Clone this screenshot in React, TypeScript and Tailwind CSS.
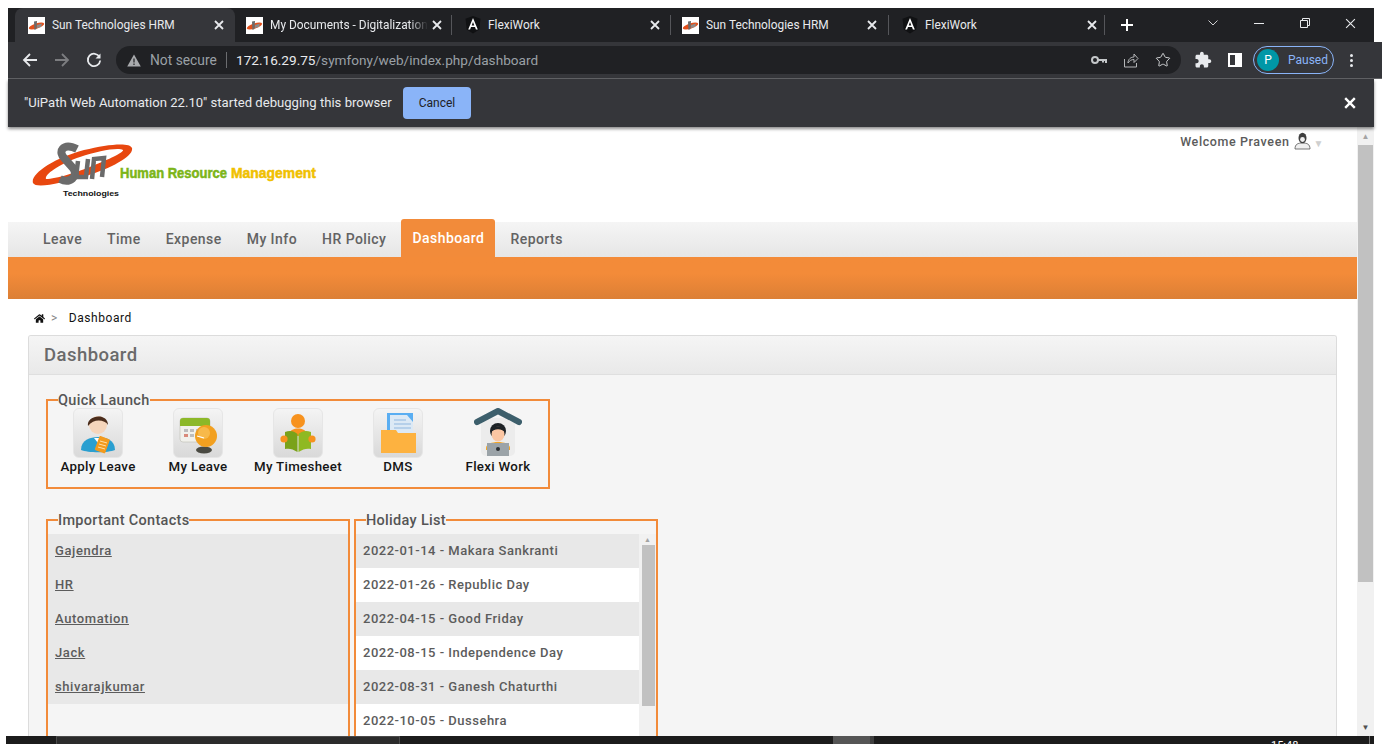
import React from "react";
import { FaHome } from "react-icons/fa";
import { Star } from "lucide-react";

const Favicon = () => (
  <svg width="17" height="17" viewBox="0 0 17 17" className="shrink-0">
    <rect width="17" height="17" fill="#fff" />
    <ellipse cx="8.5" cy="9" rx="8" ry="2.6" fill="#e2501c" transform="rotate(-18 8.5 9)" />
    <path d="M6 4.5 L9 4 L8.5 12 L6.5 13 Z" fill="#6b6b6b" />
    <path d="M9 8 L14 6.5 L13 10 L9 11 Z" fill="#8b8b8b" />
  </svg>
);

const AngularIcon = () => (
  <svg width="16" height="18" viewBox="0 0 16 18" className="shrink-0">
    <path d="M8 0 L15.5 2.7 L14.3 13.6 L8 17.5 L1.7 13.6 L0.5 2.7 Z" fill="#101113" />
    <path d="M8 2 L3.2 13.4 H5.1 L6 11 H10 L10.9 13.4 H12.8 Z M6.7 9.4 L8 6 L9.3 9.4 Z" fill="#fff" fillRule="evenodd" />
  </svg>
);

const X = ({ s = 10, w = 1.8, c = "#e8eaed" }: { s?: number; w?: number; c?: string }) => (
  <svg width={s} height={s} viewBox="0 0 10 10">
    <path d="M1 1 L9 9 M9 1 L1 9" stroke={c} strokeWidth={w} />
  </svg>
);

const Tab = ({ title, angular, active, sep, width, xPos, fade }: { title: string; angular?: boolean; active?: boolean; sep?: boolean; width: string; xPos: string; fade?: boolean }) => (
  <div className={`relative flex items-center h-[34px] shrink-0 ${width} ${active ? "bg-[#35363a] rounded-t-lg pl-[13px]" : angular ? "pl-[13px]" : "pl-[11px]"} ${sep ? "after:absolute after:right-0 after:top-[7px] after:h-[20px] after:w-px after:bg-[#55565a]" : ""}`}>
    <div className={`flex items-center ${angular ? "w-[23px]" : "w-[24px]"}`}>{angular ? <AngularIcon /> : <Favicon />}</div>
    <span className={`text-[11.9px] leading-[16px] text-[#e8eaed] whitespace-nowrap overflow-hidden w-[158px] ${fade ? "[mask-image:linear-gradient(to_right,black_88%,transparent)]" : ""}`}>{title}</span>
    <div className={`absolute top-[12px] flex ${xPos}`}><X /></div>
  </div>
);

const Logo = () => (
  <svg width="290" height="62" viewBox="0 0 290 62" className="block">
    <path fillRule="evenodd" fill="#e8470f" d="M1 41 C-2 32 22 16 52 8 C76 2 98 0 100 6 C102 14 80 26 54 34 C30 41 4 47 1 41 Z M14 37 C24 37 46 30 60 24 C78 17 92 10 91 8 C86 5 66 9 48 15 C30 21 12 32 14 37 Z" />
    <path d="M45 7 C31 0 25 10 33 17 L41 26 C47 34 38 42 28 37" fill="none" stroke="#6b6b6b" strokeWidth="8" />
    <path d="M46 19 L44 35 L54 35 L56 17 M60 37 L62 17 L72 16 L70 35" fill="none" stroke="#6a6a6a" strokeWidth="4.5" />
    <text x="88" y="36" fontFamily="'Liberation Sans',sans-serif" fontWeight="700" fontSize="14" fill="#7cb518" stroke="#7cb518" strokeWidth="0.5" textLength="107" lengthAdjust="spacingAndGlyphs">Human Resource</text>
    <text x="199" y="36" fontFamily="'Liberation Sans',sans-serif" fontWeight="700" fontSize="14" fill="#f0c000" stroke="#f0c000" strokeWidth="0.5" textLength="85" lengthAdjust="spacingAndGlyphs">Management</text>
    <text x="31" y="54" fontFamily="'Liberation Sans',sans-serif" fontWeight="700" fontSize="8" fill="#111" textLength="56" lengthAdjust="spacingAndGlyphs">Technologies</text>
  </svg>
);

const Tile = ({ children, plain }: { children: React.ReactNode; plain?: boolean }) => (
  <div className={`w-[50px] h-[50px] flex items-center justify-center ${plain ? "" : "rounded-md border border-[#e6e6e6] bg-gradient-to-b from-[#f4f4f4] to-[#d9d9d9]"}`}>{children}</div>
);

const ApplyIcon = () => (
  <svg width="40" height="42" viewBox="0 0 40 42">
    <path d="M3 38 C3 28 12 25 20 25 C28 25 37 28 37 38 C30 41 10 41 3 38 Z" fill="#2a9fd0" />
    <circle cx="20" cy="13" r="9" fill="#f5d5bb" />
    <path d="M10 14 C8 3 30 0 30 13 C27 8 16 6 10 14 Z" fill="#4b2d1c" />
    <path d="M16 26 L20 31 L24 26 Z" fill="#fff" />
    <rect x="19" y="25" width="11" height="15" rx="1" fill="#f39a1d" transform="rotate(20 24 32)" />
    <path d="M22 29 L29 31 M21 32 L28 34 M20 35 L27 37" stroke="#ffe0a8" strokeWidth="1" />
  </svg>
);
const LeaveIcon = () => (
  <svg width="40" height="42" viewBox="0 0 40 42">
    <rect x="2" y="6" width="30" height="24" rx="3" fill="#f1f1ec" stroke="#bcbcb4" strokeWidth="0.6" />
    <path d="M2 14 V9 a3 3 0 0 1 3-3 H29 a3 3 0 0 1 3 3 V14 Z" fill="#8cb828" />
    <g fill="#bdbdbd">
      <rect x="6" y="17" width="4" height="3" /><rect x="12" y="17" width="4" height="3" /><rect x="18" y="17" width="4" height="3" />
      <rect x="12" y="22" width="4" height="3" />
    </g>
    <rect x="6" y="22" width="4" height="3" fill="#d98a7a" />
    <ellipse cx="26" cy="38" rx="8" ry="3.5" fill="#4a4a42" />
    <circle cx="28" cy="24" r="11" fill="#f2a020" />
    <circle cx="26" cy="21" r="6" fill="#f9c35c" opacity="0.7" />
    <path d="M19 24 L26 26" stroke="#fff" strokeWidth="1.2" />
  </svg>
);
const SheetIcon = () => (
  <svg width="40" height="42" viewBox="0 0 40 42">
    <circle cx="20" cy="9" r="7" fill="#f7921e" />
    <path d="M12 21 C12 15 28 15 28 21 L26 24 H14 Z" fill="#f7921e" />
    <path d="M7 20 C12 18 16 19 19.5 22 V40 C15 37 11 36 7 37 Z" fill="#7aa21a" />
    <path d="M33 20 C28 18 24 19 20.5 22 V40 C25 37 29 36 33 37 Z" fill="#8fb922" />
    <circle cx="6" cy="27" r="3.6" fill="#f7921e" />
    <circle cx="34" cy="27" r="3.6" fill="#f7921e" />
  </svg>
);
const DmsIcon = () => (
  <svg width="42" height="44" viewBox="0 0 42 44">
    <rect x="10" y="2" width="26" height="24" fill="#5aaef2" />
    <path d="M13 4 H30 L36 11 V26 H13 Z" fill="#dce9f5" />
    <path d="M17 9 H29 M17 13 H34 M17 17 H34" stroke="#a9c8e6" strokeWidth="1.3" />
    <path d="M4 19 H19 L21 22 H39 V42 H4 Z" fill="#fdb240" />
  </svg>
);
const FlexiIcon = () => (
  <svg width="48" height="50" viewBox="0 0 48 50" className="block">
    <rect x="7" y="10" width="34" height="38" rx="5" fill="#ececec" />
    <path d="M3 14 L24 3 L45 14" fill="none" stroke="#3d5f6c" strokeWidth="6" strokeLinecap="round" strokeLinejoin="round" />
    <path d="M12 40 C12 32 36 32 36 40 V42 H12 Z" fill="#f5a623" />
    <circle cx="24" cy="23" r="8" fill="#1d2226" />
    <ellipse cx="24" cy="26" rx="6.5" ry="7.5" fill="#fbc6a3" />
    <path d="M17 25 C16 16 32 16 31 25 C29 20 19 20 17 25 Z" fill="#1d2226" />
    <rect x="13" y="35" width="22" height="13" fill="#9ba3a8" />
    <circle cx="24" cy="41" r="2" fill="#2b2f33" />
  </svg>
);

const quick: [string, React.ReactNode, boolean?][] = [
  ["Apply Leave", <ApplyIcon />],
  ["My Leave", <LeaveIcon />],
  ["My Timesheet", <SheetIcon />],
  ["DMS", <DmsIcon />],
  ["Flexi Work", <FlexiIcon />, true],
];
const nav = ["Leave", "Time", "Expense", "My Info", "HR Policy"];
const contacts = ["Gajendra", "HR", "Automation", "Jack", "shivarajkumar"];
const holidays = [
  "2022-01-14 - Makara Sankranti",
  "2022-01-26 - Republic Day",
  "2022-04-15 - Good Friday",
  "2022-08-15 - Independence Day",
  "2022-08-31 - Ganesh Chaturthi",
  "2022-10-05 - Dussehra",
];

const Legend = ({ children }: { children: React.ReactNode }) => (
  <legend className="ml-[10px] p-0 translate-y-[1px] text-[14.5px] leading-[14px] font-medium text-[#555] tracking-[0.3px]">{children}</legend>
);

export default function App() {
  return (
    <div className="w-[1382px] h-[744px] overflow-hidden bg-white pt-2 flex flex-col font-['Roboto',sans-serif]">
      <div className="mx-2 w-[1366px] bg-[#202124] h-[34px] flex shrink-0 pl-[7px]">
        <Tab active width="w-[220px]" xPos="right-[11px]" title="Sun Technologies HRM" />
        <Tab sep fade width="w-[217px]" xPos="right-[10px]" title="My Documents - Digitalization" />
        <Tab sep angular width="w-[219px]" xPos="right-[11px]" title="FlexiWork" />
        <Tab sep width="w-[218px]" xPos="right-[12px]" title="Sun Technologies HRM" />
        <Tab sep angular width="w-[216px]" xPos="right-[8px]" title="FlexiWork" />
        <div className="flex items-center ml-[15px] h-[34px]">
          <svg width="14" height="14" viewBox="0 0 14 14"><path d="M7 1 V13 M1 7 H13" stroke="#fff" strokeWidth="2" /></svg>
        </div>
        <div className="flex items-start pt-[10px] ml-[74px] gap-[36px]">
          <svg width="10" height="10" viewBox="0 0 10 10"><path d="M0.5 2.5 L5 7 L9.5 2.5" fill="none" stroke="#d0d1d3" strokeWidth="1" /></svg>
          <svg width="10" height="10" viewBox="0 0 10 10"><path d="M0 5.5 H10" stroke="#e8eaed" strokeWidth="1" /></svg>
          <svg width="10" height="10" viewBox="0 0 10 10"><path d="M0.5 2.5 H7.5 V9.5 H0.5 Z M2.5 2.5 V0.5 H9.5 V7.5 H7.5" fill="none" stroke="#e8eaed" strokeWidth="1" /></svg>
          <div className="-ml-[1px]"><X s={11} w={1} /></div>
        </div>
      </div>

      <div className="mx-2 w-[1366px] h-[36px] shrink-0 bg-[#35363a] flex items-center border-b border-[#626366] pl-[14px] box-content">
        <svg width="16" height="16" viewBox="0 0 16 16"><path d="M15 8 H2 M8 2 L2 8 L8 14" fill="none" stroke="#e8eaed" strokeWidth="1.8" /></svg>
        <svg width="16" height="16" viewBox="0 0 16 16" className="ml-[16px]"><path d="M1 8 H14 M8 2 L14 8 L8 14" fill="none" stroke="#7c7d80" strokeWidth="1.8" /></svg>
        <svg width="16" height="16" viewBox="0 0 16 16" className="ml-[16px]"><path d="M13.5 5 A6.2 6.2 0 1 0 14.2 8.5" fill="none" stroke="#e8eaed" strokeWidth="1.8" /><path d="M14.5 1.5 V6.5 H9.5 Z" fill="#e8eaed" /></svg>
        <div className="ml-[14px] w-[1065px] h-[28px] rounded-full bg-[#202124] flex items-center pl-[11px] text-[14px]">
          <svg width="14" height="13" viewBox="0 0 14 13"><path d="M7 0.5 L13.8 12.5 H0.2 Z" fill="#a8aaad" /><path d="M7 4.5 V8.5 M7 9.6 V11" stroke="#202124" strokeWidth="1.2" /></svg>
          <span className="ml-[9px] text-[#9aa0a6] text-[13.8px] w-[67px] whitespace-nowrap">Not secure</span>
          <span className="ml-[9px] w-px h-[16px] bg-[#6b6c6f]" />
          <span className="ml-[9px] whitespace-nowrap w-[303px] text-[13.6px] text-[#e8eaed]">172.16.29.75<span className="text-[#9aa0a6]">/symfony/web/index.php/dashboard</span></span>
          <svg width="16" height="10" viewBox="0 0 16 10" className="ml-[552px]"><circle cx="4" cy="5" r="3" fill="none" stroke="#c4c7c9" strokeWidth="2" /><path d="M7 5 H15 V8 M12 5 V7.5" fill="none" stroke="#c4c7c9" strokeWidth="2" /></svg>
          <svg width="16" height="16" viewBox="0 0 16 16" className="ml-[16px]"><path d="M1.5 7 V15 H13.5 V11" fill="none" stroke="#b5b7b9" strokeWidth="1" /><path d="M5 11 C5 7 8 5 11 5 V2 L15 6.5 L11 10.5 V7.5 C8.5 7.5 6.5 8.5 5 11 Z" fill="none" stroke="#b5b7b9" strokeWidth="1" /></svg>
          <Star size={16} strokeWidth={1.4} color="#d6d8da" className="ml-[16px]" />
        </div>
        <svg width="18" height="18" viewBox="0 0 24 24" className="ml-[13px]"><path fill="#e8eaed" d="M20.5 11H19V7c0-1.1-.9-2-2-2h-4V3.5C13 2.12 11.88 1 10.5 1S8 2.12 8 3.5V5H4c-1.1 0-1.99.9-1.99 2v3.8H3.5c1.49 0 2.7 1.21 2.7 2.7s-1.21 2.7-2.7 2.7H2V20c0 1.1.9 2 2 2h3.8v-1.5c0-1.49 1.21-2.7 2.7-2.7 1.49 0 2.7 1.21 2.7 2.7V22H17c1.1 0 2-.9 2-2v-4h1.5c1.38 0 2.5-1.12 2.5-2.5S21.88 11 20.5 11z" /></svg>
        <svg width="14" height="14" viewBox="0 0 14 14" className="ml-[16px]"><rect x="1" y="1" width="12" height="12" fill="none" stroke="#fff" strokeWidth="2" /><rect x="7" y="1" width="6" height="12" fill="#fff" /></svg>
        <div className="ml-[11px] w-[81px] h-[28px] rounded-full border border-[#8ab4f8] flex items-center pl-[3px]">
          <div className="w-[22px] h-[22px] rounded-full bg-[#0097a7] text-white text-[12px] flex items-center justify-center">P</div>
          <span className="ml-[9px] text-[12px] text-[#8ab4f8]">Paused</span>
        </div>
        <div className="ml-[16px] flex flex-col gap-[2px]">
          <span className="w-[3px] h-[3px] bg-[#e8eaed] rounded-full" />
          <span className="w-[3px] h-[3px] bg-[#e8eaed] rounded-full" />
          <span className="w-[3px] h-[3px] bg-[#e8eaed] rounded-full" />
        </div>
      </div>

      <div className="mx-2 w-[1366px] h-[48px] shrink-0 bg-[#35363a] flex items-center pl-[16px] shadow-[0_2px_3px_rgba(0,0,0,0.45)] relative z-10">
        <span className="text-[13.1px] text-[#e8eaed] whitespace-nowrap w-[367px]">"UiPath Web Automation 22.10" started debugging this browser</span>
        <button className="ml-[12px] w-[68px] h-[32px] rounded bg-[#8ab4f8] text-[#202124] text-[12px]">Cancel</button>
        <div className="ml-auto mr-[18px] flex"><X s={12} w={2} c="#fff" /></div>
      </div>

      <div className="mx-2 w-[1366px] flex-1 min-h-0 flex">
        <div className="w-[1349px] overflow-hidden bg-white flex flex-col">
          <div className="h-[95px] shrink-0 flex justify-between">
            <div className="ml-[24px] mt-[15px]"><Logo /></div>
            <div className="mr-[33px] mt-[5px] flex items-start text-[12.5px] font-medium text-[#5b5b5b] tracking-[0.6px]">
              <span className="mt-[1px]">Welcome Praveen</span>
              <svg width="17" height="18" viewBox="0 0 17 18" className="ml-[4px]"><path d="M1 17 C1 12 4 11 8.5 11 C13 11 16 12 16 17 Z" fill="#efefef" stroke="#555" strokeWidth="0.8" /><ellipse cx="8.5" cy="6" rx="4" ry="5.2" fill="#3e3e3e" /><circle cx="8.5" cy="7.5" r="2.4" fill="#f0f0f0" /></svg>
              <span className="ml-[3px] mt-[4px] text-[10px] text-[#cfcfcf]">▼</span>
            </div>
          </div>
          <div className="h-[35px] shrink-0 bg-gradient-to-b from-[#f5f5f5] to-[#e6e6e6] flex pl-[35px] text-[14px] font-medium text-[#636363] tracking-[0.45px]">
            <div className="flex items-center gap-[25px]">
              {nav.map((n) => <span key={n} className="whitespace-nowrap">{n}</span>)}
            </div>
            <div className="ml-[15px] -mt-[3px] h-[38px] w-[94px] rounded-t-[3px] bg-[#f28b3a] text-white flex items-center justify-center">Dashboard</div>
            <div className="ml-[15px] flex items-center">Reports</div>
          </div>
          <div className="h-[42px] shrink-0 bg-gradient-to-b from-[#f38b39] from-40% to-[#dc7f35]" />
          <div className="h-[36px] shrink-0 pl-[26px] pt-[2px] flex items-center text-[12px] text-[#111] tracking-[0.55px]">
            <FaHome size={11} color="#111" />
            <span className="ml-[6px] text-[#888] text-[12px]">&gt;</span>
            <span className="ml-[11px]">Dashboard</span>
          </div>
          <div className="mx-[20px] flex-1 min-h-0 rounded-t-[3px] border-x border-t border-[#dcdcdc] bg-[#f5f5f5] overflow-hidden">
            <div className="h-[39px] pt-[1px] border-b border-[#dfdfdf] bg-gradient-to-b from-[#f5f5f5] to-[#e9e9e9] pl-[15px] flex items-center text-[18.5px] font-medium text-[#6a6a6a] tracking-[0.45px]">Dashboard</div>
            <div className="pl-[17px] pt-[18px]">
              <fieldset className="w-[504px] h-[96px] border-2 border-[#f28b3a] flex">
                <Legend>Quick Launch</Legend>
                <div className="flex mt-[1px]">
                  {quick.map(([label, icon, plain]) => (
                    <div key={label} className="w-[100px] flex flex-col items-center">
                      <Tile plain={plain}>{icon}</Tile>
                      <span className="mt-[1px] text-[13.3px] leading-[16px] font-medium text-[#151515] tracking-[0.3px] whitespace-nowrap">{label}</span>
                    </div>
                  ))}
                </div>
              </fieldset>
              <div className="flex gap-[4px] mt-[24px]">
                <fieldset className="w-[304px] h-[300px] border-2 border-[#f28b3a] pt-[7px]">
                  <Legend>Important Contacts</Legend>
                  {contacts.map((c) => (
                    <div key={c} className="h-[34px] bg-[#e8e8e8] pl-[7px] flex items-center text-[13px] font-medium text-[#5c5c5c] underline tracking-[0.6px]">{c}</div>
                  ))}
                </fieldset>
                <fieldset className="w-[304px] h-[300px] border-2 border-[#f28b3a] pt-[7px]">
                  <Legend>Holiday List</Legend>
                  <div className="flex">
                    <div className="w-[283px]">
                      {holidays.map((h, i) => (
                        <div key={h} className={`h-[34px] pl-[7px] flex items-center text-[13px] font-medium text-[#5c5c5c] tracking-[0.5px] whitespace-nowrap ${i % 2 === 0 ? "bg-[#e8e8e8]" : "bg-white"}`}>{h}</div>
                      ))}
                    </div>
                    <div className="w-[17px] h-[204px] bg-[#f1f1f1] flex flex-col items-center">
                      <span className="mt-[1px] h-[10px] text-[7px] leading-[10px] text-[#a3a3a3]">▲</span>
                      <div className="ml-[1px] w-[13px] h-[161px] bg-[#c1c1c1]" />
                    </div>
                  </div>
                </fieldset>
              </div>
            </div>
          </div>
        </div>
        <div className="w-[17px] bg-[#f1f1f1] flex flex-col items-center relative">
          <span className="mt-[5px] h-[13px] text-[8px] leading-[10px] text-[#a3a3a3]">▲</span>
          <div className="w-[15px] h-[437px] bg-[#c1c1c1]" />
          <span className="mt-auto mb-[3px] text-[8px] leading-[10px] text-[#505050]">▼</span>
        </div>
      </div>

      <div className="ml-[6px] w-[1368px] h-[8px] shrink-0 bg-[#1c1c1c] flex overflow-hidden relative">
        <div className="ml-[50px] w-[344px] bg-[#2b2b2b] border-x border-t border-[#4a4a4a]" />
        <div className="ml-[433px] w-[37px] bg-[#555]" />
        <div className="w-[4px] bg-[#3f3f3f]" />
        <span className="ml-[397px] mt-[4px] text-[11px] leading-[12px] text-white whitespace-nowrap">15:48</span>
        <div className="ml-auto mr-[4px] w-px bg-[#777]" />
      </div>
    </div>
  );
}
